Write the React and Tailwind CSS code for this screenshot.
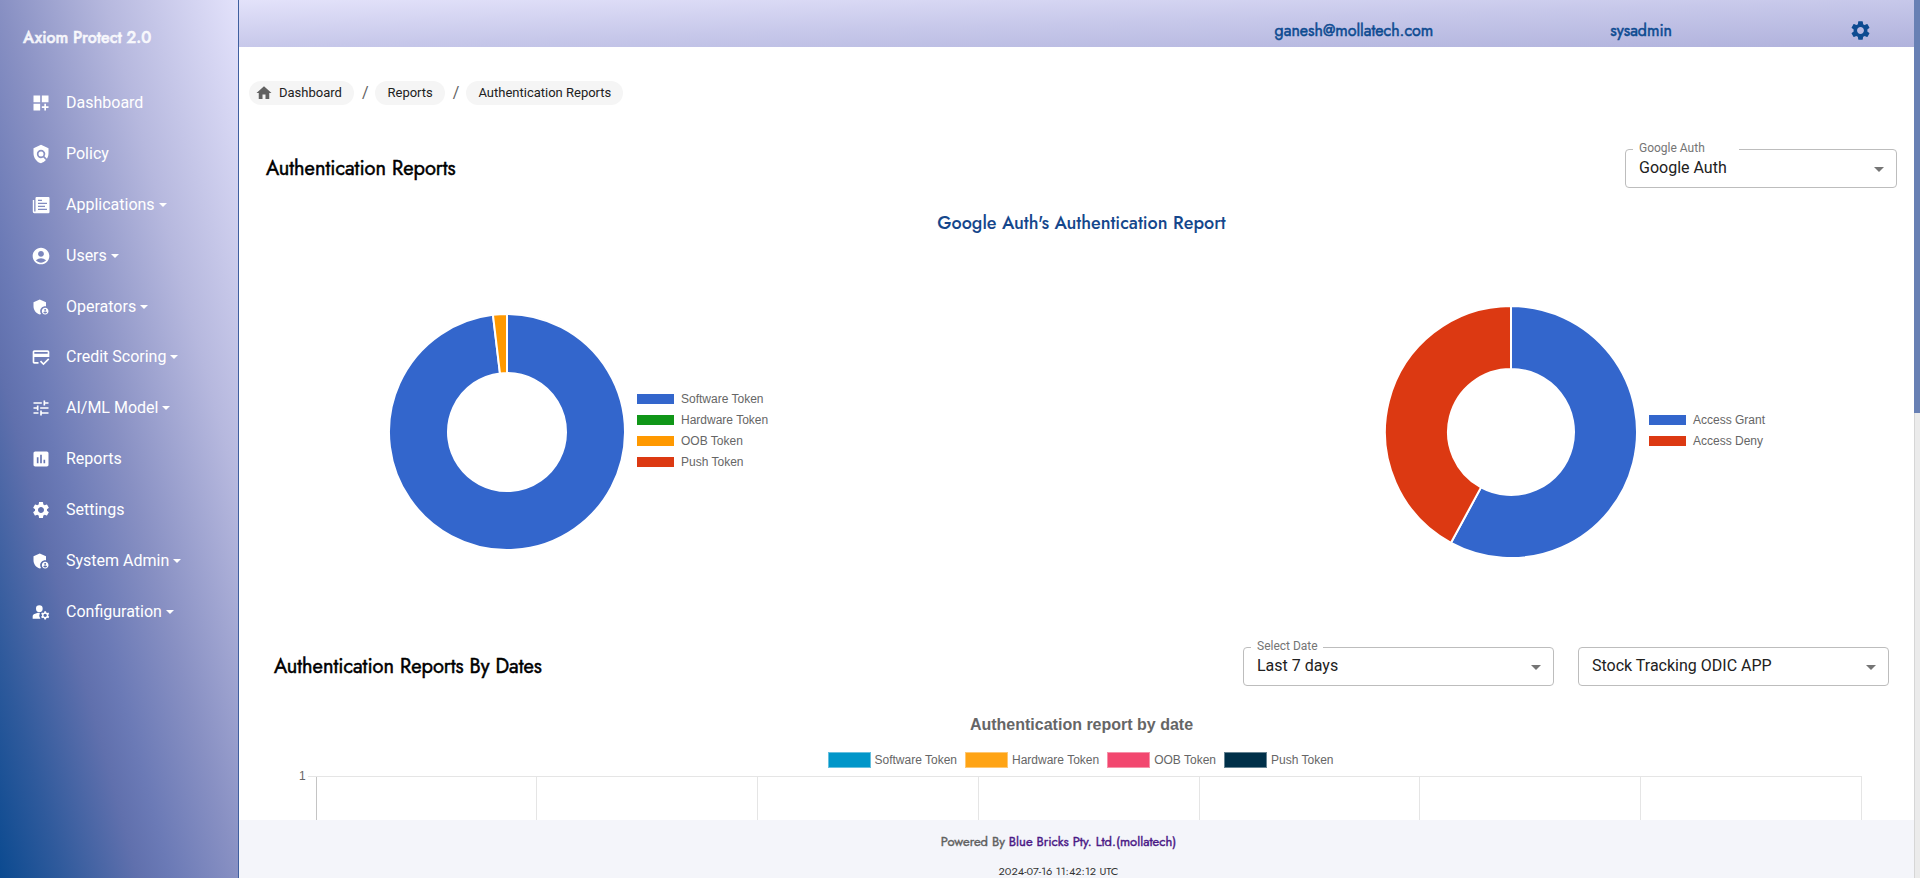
import {
  MdAccountCircle,
  MdAdminPanelSettings,
  MdAssessment,
  MdCreditScore,
  MdDashboardCustomize,
  MdHome,
  MdManageAccounts,
  MdPolicy,
  MdSettings,
  MdTune,
} from "react-icons/md";

function ApplicationsIcon({ className }) {
  return (
    <svg viewBox="-1 -1 20 20" className={className} fill="currentColor" aria-hidden="true">
      <path
        fillRule="evenodd"
        d="M5 1h11.5a1 1 0 0 1 1 1v14a1.2 1.2 0 0 1-1.2 1.200H2.200A1.500 1.500 0 0 1 .8 15.700V4h1.400v11.500h1.300V2A1.200 1.200 0 0 1 5 1zM6 3.800v1.200h4V3.800zM6 6.800v1.200h9V6.800zM6 9.800v1.200h7V9.800zM6 12.800v1.200h9v-1.200z"
      />
    </svg>
  );
}

const navItems = [
  { label: "Dashboard", Icon: MdDashboardCustomize },
  { label: "Policy", Icon: MdPolicy },
  { label: "Applications", Icon: ApplicationsIcon, menu: true },
  { label: "Users", Icon: MdAccountCircle, menu: true },
  { label: "Operators", Icon: MdAdminPanelSettings, menu: true },
  { label: "Credit Scoring", Icon: MdCreditScore, menu: true },
  { label: "AI/ML Model", Icon: MdTune, menu: true },
  { label: "Reports", Icon: MdAssessment },
  { label: "Settings", Icon: MdSettings },
  { label: "System Admin", Icon: MdAdminPanelSettings, menu: true },
  { label: "Configuration", Icon: MdManageAccounts, menu: true },
];

function Sidebar() {
  return (
    <aside className="flex w-[239px] shrink-0 flex-col border-r border-[#3f5f9f] bg-[linear-gradient(to_bottom_left,#e3e2fb_0%,#b6b8de_28%,#8890c3_50%,#6b7ab6_64%,#6070ad_71%,#2f5a9c_87%,#0b4a90_100%)]">
      <h1 className="px-[23px] pt-[26px] text-base leading-6 font-medium text-white/85 [-webkit-text-stroke:0.5px]">
        Axiom Protect 2.0
      </h1>
      <nav className="mt-[28px] grid h-[559px] auto-rows-fr font-[Roboto,sans-serif] text-base text-white">
        {navItems.map(({ label, Icon, menu }) => (
          <a key={label} href="#" className="flex items-center pl-[31px]">
            <Icon className="size-5" />
            <span className="ml-[15px]">{label}</span>
            {menu && (
              <svg viewBox="0 0 8 4" className="ml-1 h-1 w-2" fill="currentColor" aria-hidden="true">
                <path d="M0 0h8L4 4z" />
              </svg>
            )}
          </a>
        ))}
      </nav>
    </aside>
  );
}

function Header() {
  return (
    <header className="flex h-[47px] shrink-0 items-center justify-end gap-[177px] bg-[linear-gradient(to_bottom_right,#e3e2fa_0%,#c7c8ea_50%,#b0b2dc_100%)] pt-[14px] pr-[42px] text-base leading-6 text-[#0d4b91] [-webkit-text-stroke:0.5px]">
      <span>ganesh@mollatech.com</span>
      <span>sysadmin</span>
      <button type="button" aria-label="Settings">
        <MdSettings className="size-[23px]" />
      </button>
    </header>
  );
}

function Breadcrumbs() {
  const chip = "flex h-6 items-center rounded-full bg-[#f5f5f5] text-[#212121]";
  return (
    <nav
      aria-label="Breadcrumb"
      className="flex items-center font-[Roboto,sans-serif] text-[13px] leading-6 text-[#616161]"
    >
      <a href="#" className={`${chip} pr-3 pl-[6px]`}>
        <MdHome className="mr-[6px] size-[18px] text-[#616161]" />
        Dashboard
      </a>
      <span className="mr-[7px] ml-2 text-base">/</span>
      <a href="#" className={`${chip} px-3`}>Reports</a>
      <span className="mr-[7px] ml-2 text-base">/</span>
      <a href="#" className={`${chip} px-3`}>Authentication Reports</a>
    </nav>
  );
}

function SelectBox({ id, label, value, className, labelClass }) {
  return (
    <div className={`relative font-[Roboto,sans-serif] ${className}`}>
      <select
        id={id}
        aria-label={label ? undefined : value}
        className="block h-[39px] w-full appearance-none rounded-[4px] border border-[#bdbdbd] bg-white px-[13px] pb-px text-base leading-6 text-[#212121]"
      >
        <option>{value}</option>
      </select>
      {label && (
        <label
          htmlFor={id}
          className={`absolute -top-[9px] left-2 bg-white px-[6px] text-xs leading-4 whitespace-nowrap text-[#757575] ${labelClass}`}
        >
          {label}
        </label>
      )}
      <svg
        viewBox="0 0 10 5"
        className="pointer-events-none absolute top-[18px] right-[13px] h-[5px] w-[10px]"
        fill="#757575"
        aria-hidden="true"
      >
        <path d="M0 0h10L5 5z" />
      </svg>
    </div>
  );
}

function arc(start, end, outer, inner) {
  const point = (t, r) =>
    `${Math.sin(t * 2 * Math.PI) * r} ${-Math.cos(t * 2 * Math.PI) * r}`;
  const large = end - start > 0.5 ? 1 : 0;
  return `M${point(start, outer)}A${outer} ${outer} 0 ${large} 1 ${point(end, outer)}L${point(end, inner)}A${inner} ${inner} 0 ${large} 0 ${point(start, inner)}Z`;
}

function Doughnut({ label, slices, legend, outer, inner, className }) {
  const size = outer + 1;
  return (
    <figure className="flex items-center gap-[11px]">
      <svg
        viewBox={`${-size} ${-size} ${size * 2} ${size * 2}`}
        className={className}
        role="img"
        aria-label={label}
      >
        {slices.map((s) => (
          <path
            key={s.color}
            d={arc(s.from, s.to, outer, inner)}
            fill={s.color}
            stroke="#fff"
            strokeWidth="2"
            strokeLinejoin="bevel"
          />
        ))}
      </svg>
      <ul className="pb-[2px] font-['Liberation_Sans',sans-serif] text-xs text-[#666]">
        {legend.map(({ name, color }) => (
          <li key={name} className="flex h-[21px] items-center gap-[7px]">
            <span className={`h-[10px] w-[37px] ${color}`} />
            {name}
          </li>
        ))}
      </ul>
    </figure>
  );
}

const dateLegend = [
  { name: "Software Token", color: "bg-[#0096c9] border-[#66c0df]" },
  { name: "Hardware Token", color: "bg-[#ffa415] border-[#ffc873]" },
  { name: "OOB Token", color: "bg-[#f2476f] border-[#f791a9]" },
  { name: "Push Token", color: "bg-[#003049] border-[#668392]" },
];

function DateChart() {
  return (
    <section className="font-['Liberation_Sans',sans-serif] text-[#666]">
      <h3 className="pt-[27px] pl-[10px] text-center text-base leading-6 font-bold">
        Authentication report by date
      </h3>
      <ul className="mt-[11px] flex h-6 items-center justify-center gap-2 pl-2 text-xs">
        {dateLegend.map(({ name, color }) => (
          <li key={name} className="flex items-center gap-1">
            <span className={`h-4 w-[43px] border ${color}`} />
            {name}
          </li>
        ))}
      </ul>
      <div className="mt-[-4px] flex items-start pr-[52px] pl-[60px] text-xs leading-4">
        <span className="mr-[2px]">1</span>
        <div className="mt-2 h-px w-2 bg-[#e5e5e5]" />
        <div className="mt-2 grid h-[300px] flex-1 grid-cols-7 border-t border-r border-[#e5e5e5]">
          {[0, 1, 2, 3, 4, 5, 6].map((n) => (
            <div
              key={n}
              className={`border-l ${n === 0 ? "border-[#c4c4c4]" : "border-[#e5e5e5]"}`}
            />
          ))}
        </div>
      </div>
    </section>
  );
}

export default function App() {
  return (
    <div className="flex h-screen overflow-hidden bg-white font-[Jost,Lato,sans-serif]">
      <Sidebar />
      <div className="flex min-w-0 flex-1 flex-col">
        <Header />
        <main className="min-h-0 flex-1 overflow-hidden">
          <div className="pt-[34px] pl-[10px]">
            <Breadcrumbs />
          </div>

          <div className="mt-11 flex items-center justify-between pr-[17px] pl-[27px]">
            <h2 className="text-xl leading-6 text-black [-webkit-text-stroke:0.5px]">
              Authentication Reports
            </h2>
            <SelectBox
              id="auth-app"
              label="Google Auth"
              value="Google Auth"
              className="w-[272px]"
              labelClass="w-[106px]"
            />
          </div>

          <h3 className="mt-[17px] pl-[10px] text-center text-lg leading-9 font-medium text-[#15478c]">
            Google Auth's Authentication Report
          </h3>

          <div className="flex h-[381px] items-center justify-between px-[149px]">
            <Doughnut
              label="Authentication by token type"
              outer={118}
              inner={59}
              className="size-[238px]"
              slices={[
                { from: 0, to: 0.981, color: "#3366cc" },
                { from: 0.981, to: 1, color: "#ff9900" },
              ]}
              legend={[
                { name: "Software Token", color: "bg-[#3366cc]" },
                { name: "Hardware Token", color: "bg-[#109618]" },
                { name: "OOB Token", color: "bg-[#ff9900]" },
                { name: "Push Token", color: "bg-[#dc3912]" },
              ]}
            />
            <Doughnut
              label="Access granted and denied"
              outer={126}
              inner={63}
              className="size-[254px]"
              slices={[
                { from: 0, to: 0.579, color: "#3366cc" },
                { from: 0.579, to: 1, color: "#dc3912" },
              ]}
              legend={[
                { name: "Access Grant", color: "bg-[#3366cc]" },
                { name: "Access Deny", color: "bg-[#dc3912]" },
              ]}
            />
          </div>

          <div className="mt-[25px] flex items-center gap-6 pr-[25px] pl-[35px]">
            <h2 className="flex-1 text-xl leading-6 text-black [-webkit-text-stroke:0.5px]">
              Authentication Reports By Dates
            </h2>
            <SelectBox
              id="date-range"
              label="Select Date"
              value="Last 7 days"
              className="w-[311px]"
              labelClass="w-[72px]"
            />
            <SelectBox id="application" value="Stock Tracking ODIC APP" className="w-[311px]" />
          </div>

          <DateChart />
        </main>

        <footer className="h-[58px] shrink-0 overflow-hidden bg-[#f4f5fa] pt-3 pr-9 text-center">
          <p className="text-[13px] leading-5 text-[#616161] [-webkit-text-stroke:0.4px]">
            Powered By{" "}
            <a href="#" className="text-[#4b1a86]">
              Blue Bricks Pty. Ltd.(mollatech)
            </a>
          </p>
          <p className="mt-[9px] text-[11px] leading-5 text-[#333]">2024-07-16 11:42:12 UTC</p>
        </footer>
      </div>
      <div className="w-[6px] shrink-0 border-l border-[#d6d6d6] bg-[#ebebeb]">
        <div className="-ml-px h-[47%] bg-[#6880b4]" />
      </div>
    </div>
  );
}
